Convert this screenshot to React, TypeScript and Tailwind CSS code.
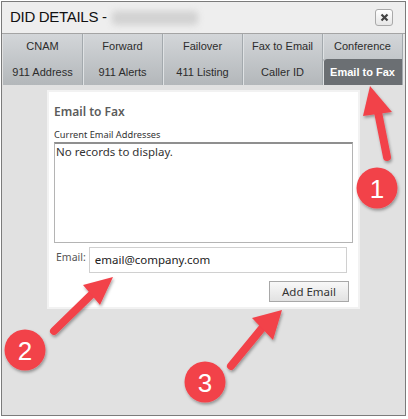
import React from "react";

const TABS = [
  "CNAM",
  "Forward",
  "Failover",
  "Fax to Email",
  "Conference",
  "911 Address",
  "911 Alerts",
  "411 Listing",
  "Caller ID",
  "Email to Fax",
];

function Annotations() {
  const red = "#f2424a";
  return (
    <svg
      className="absolute left-0 top-0 pointer-events-none"
      width={408}
      height={419}
      viewBox="0 0 408 419"
    >
      <defs>
        <filter id="sh" x="-50%" y="-50%" width="200%" height="200%">
          <feDropShadow dx="1" dy="2" stdDeviation="1.6" floodColor="#000" floodOpacity="0.35" />
        </filter>
      </defs>
      <g filter="url(#sh)">
        {/* arrow 1 */}
        <line x1={387} y1={157} x2={378} y2={112} stroke={red} strokeWidth={8} strokeLinecap="round" />
        <polygon points="370,86 363,116 392,112" fill={red} />
        {/* arrow 2 */}
        <line x1={54} y1={331} x2={93} y2={293} stroke={red} strokeWidth={8} strokeLinecap="round" />
        <polygon points="113,277 83,285 100,305" fill={red} />
        {/* arrow 3 */}
        <line x1={231} y1={366} x2={263} y2={327} stroke={red} strokeWidth={8} strokeLinecap="round" />
        <polygon points="282,310 252,318 273,340" fill={red} />
        {/* numbered circles */}
        <circle cx={377} cy={188} r={20.5} fill={red} />
        <circle cx={25} cy={350} r={20.5} fill={red} />
        <circle cx={205} cy={382} r={20.5} fill={red} />
      </g>
      <g fill="#fff" fontFamily="'Liberation Sans', Arial, sans-serif" fontSize={26} textAnchor="middle">
        <text x={377} y={198}>1</text>
        <text x={25} y={360}>2</text>
        <text x={205} y={392}>3</text>
      </g>
    </svg>
  );
}

export default function App() {
  return (
    <div className="relative w-[408px] h-[419px] bg-white overflow-hidden font-['Liberation_Sans',Arial,sans-serif]">
      <div className="ml-px mt-px w-[405px] h-[415px] border border-[#7b7b7b] bg-[#e1e1e1] flex flex-col">
        {/* title bar */}
        <div className="h-[31px] bg-[#eeeeee] flex items-center pl-[8px] pr-[12px]">
          <span className="text-[15px] text-[#111] tracking-[-0.3px]">DID DETAILS -</span>
          <div className="ml-[5px] w-[86px] h-[14px] bg-[#d2d2d2] blur-[3px] rounded" />
          <button className="ml-auto w-[18px] h-[17px] border border-[#a9a9a9] rounded-[3px] bg-gradient-to-b from-white to-[#e6e6e6] flex items-center justify-center">
            <svg width="9" height="9" viewBox="0 0 9 9">
              <path d="M1.5 1.5 L7.5 7.5 M7.5 1.5 L1.5 7.5" stroke="#444" strokeWidth="2.2" />
            </svg>
          </button>
        </div>

        {/* tab strip */}
        <div className="border-t border-[#a4a4a4] flex">
          <div className="ml-px w-[400px] grid grid-cols-5 grid-rows-[25px_26px] bg-gradient-to-b from-[#d3d6d9] to-[#b3b7ba]">
            {TABS.map((t, i) => {
              const active = t === "Email to Fax";
              return (
                <div
                  key={t}
                  className={
                    "flex items-center justify-center border-r border-[#a3a9ad] text-[11px] " +
                    (i % 5 === 0 ? "" : "shadow-[inset_1px_0_0_#dfe2e4] ") +
                    (active
                      ? "bg-[#6b6f73] text-white font-bold rounded-tl-[3px]"
                      : "text-[#2c2c2c]")
                  }
                >
                  {t}
                </div>
              );
            })}
          </div>
          <div className="flex-1 bg-[#e6e6e6]" />
        </div>

        {/* body */}
        <div className="flex-1 pt-[5px] pl-[45px]">
          <div className="w-[313px] h-[219px] bg-white border-2 border-[#f2f2f2] pl-[5px] pr-[5px] font-['Noto_Sans',sans-serif]">
            <div className="mt-[12px] text-[12px] leading-[16px] font-semibold text-[#5b5b5b]">Email to Fax</div>
            <div className="mt-[9px] text-[9.25px] leading-[12px] text-[#333]">Current Email Addresses</div>
            <div className="mt-px w-[299px] h-[101px] border border-[#b4b4b4] border-t-2 border-t-[#8f8f8f] px-px">
              <div className="text-[11.5px] leading-[16px] text-[#333]">No records to display.</div>
            </div>
            <div className="mt-[4px] flex items-start">
              <span className="ml-[2px] mt-[3px] text-[10.5px] leading-[14px] text-[#555]">Email:</span>
              <div className="ml-[3px] w-[258px] h-[26px] border border-[#d0d0d0] flex items-center pl-[5px] text-[11.5px] text-[#222]">
                email@company.com
              </div>
            </div>
            <div className="mt-[8px] flex justify-end pr-[4px]">
              <button className="w-[80px] h-[21px] border border-[#a8a8a8] bg-gradient-to-b from-[#f8f8f8] to-[#e2e2e2] text-[11.5px] leading-none text-[#333]">
                Add Email
              </button>
            </div>
          </div>
        </div>
      </div>
      <Annotations />
    </div>
  );
}
